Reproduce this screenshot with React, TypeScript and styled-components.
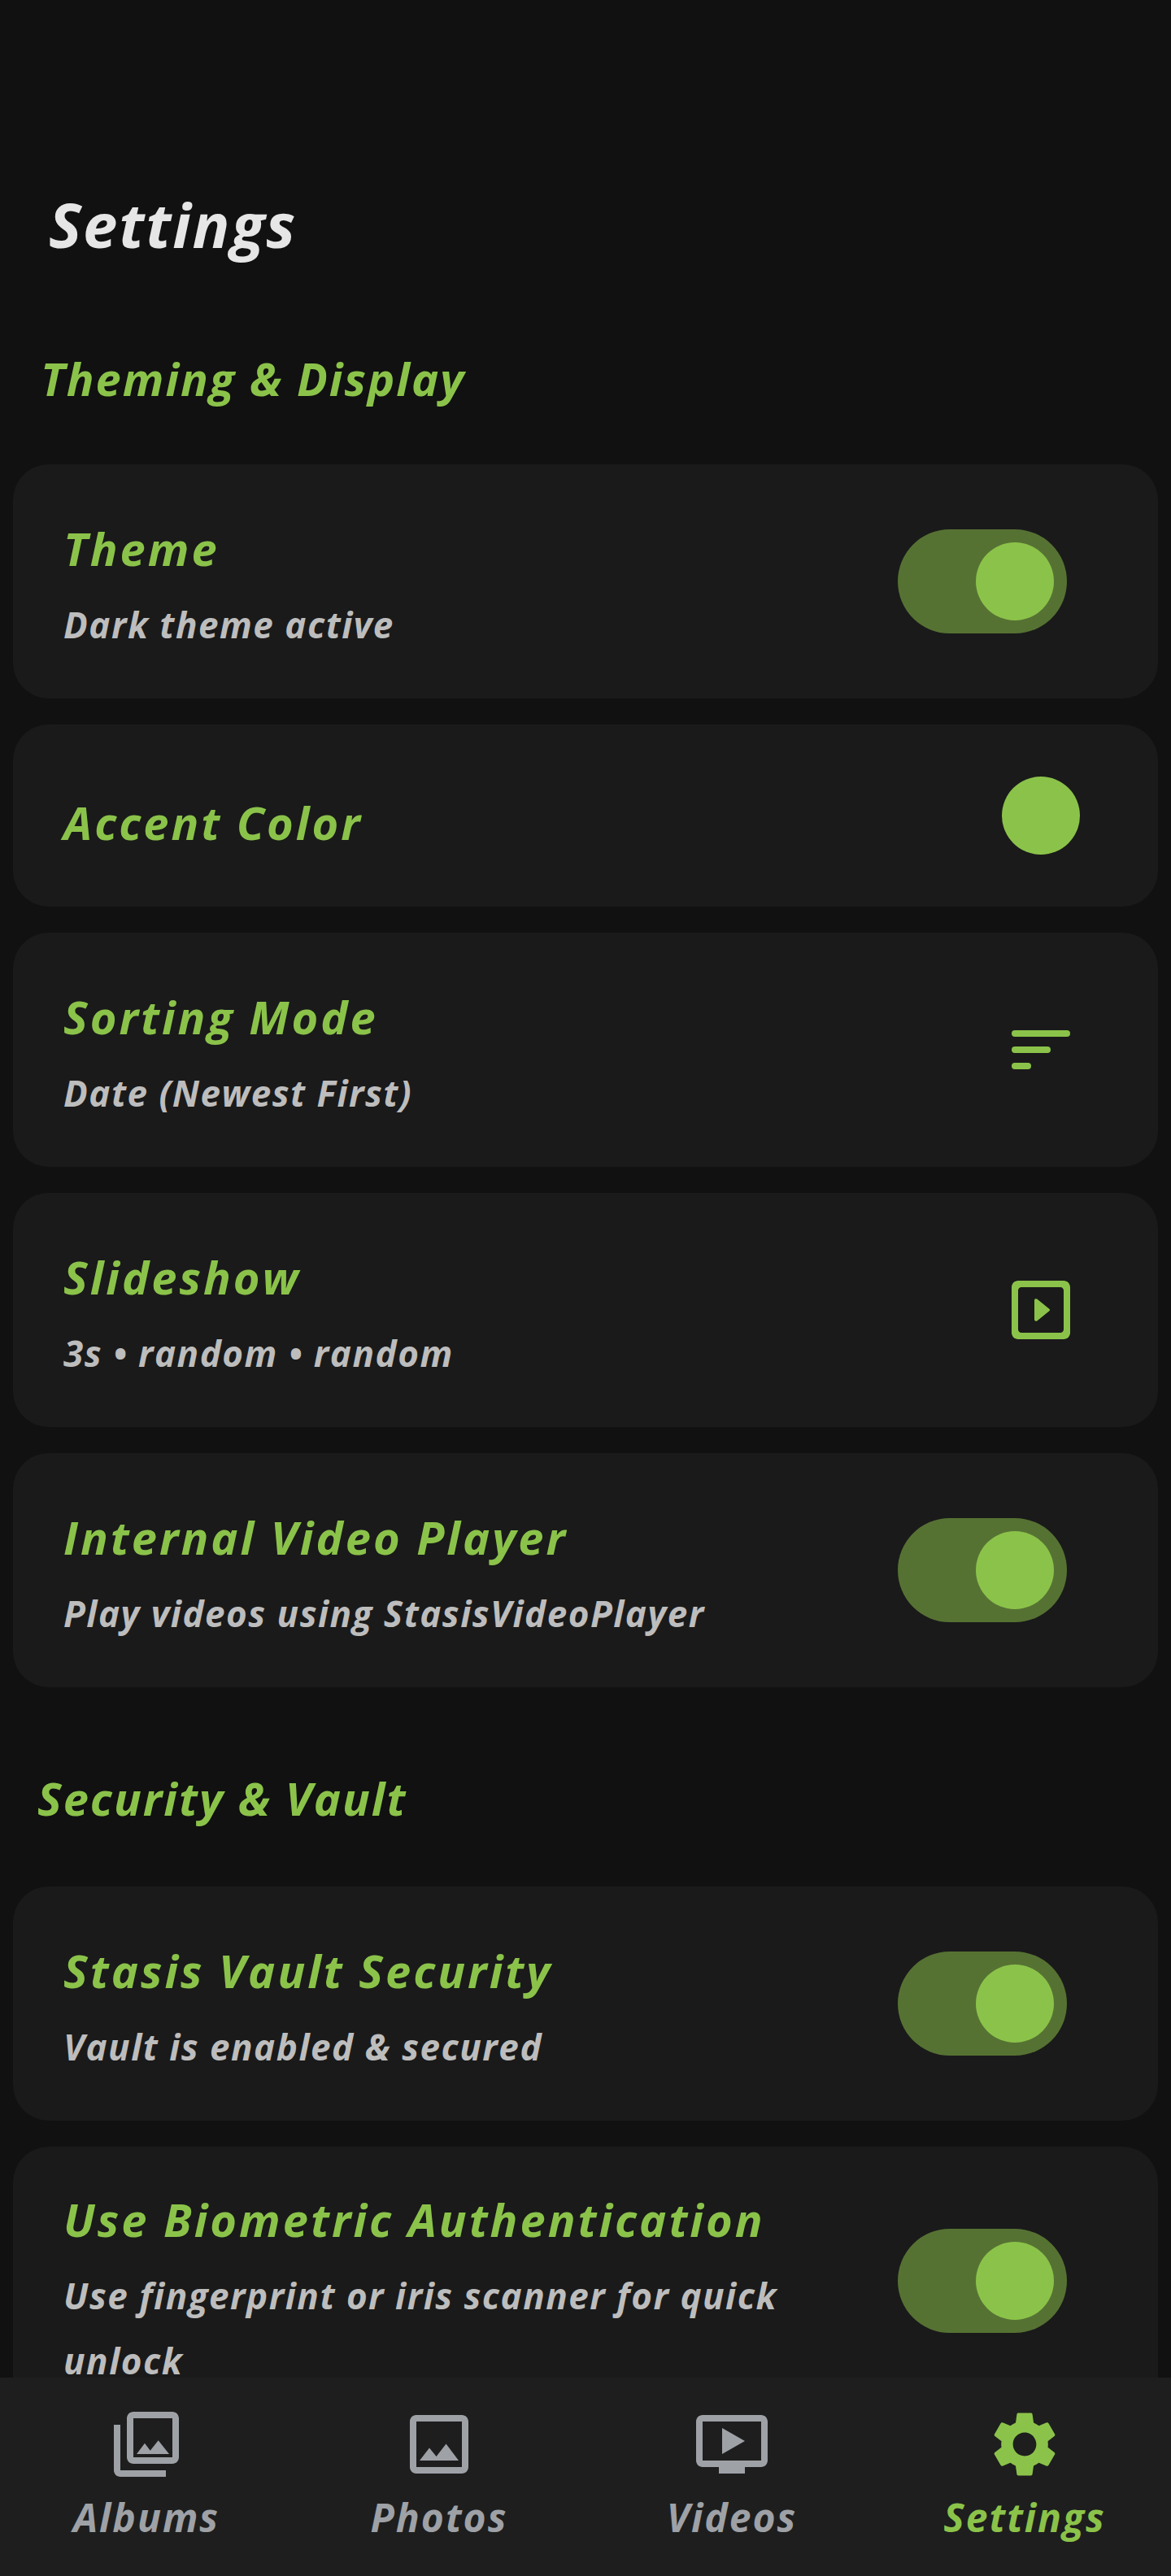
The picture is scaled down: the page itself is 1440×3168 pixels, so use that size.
import React from 'react';
import styled, { createGlobalStyle } from 'styled-components';

const ACCENT = '#8bc34a';
const FONT = '"Open Sans", "Noto Sans", sans-serif';

const GlobalStyle = createGlobalStyle`
    html, body {
        margin: 0;
        background: #111111;
    }
`;

const Screen = styled.div`
    position: relative;
    width: 1440px;
    height: 3168px;
    overflow: hidden;
    background: #111111;
    font-family: ${FONT};
    font-style: italic;
    font-weight: 700;
`;

const Content = styled.div`
    display: flex;
    flex-direction: column;
    padding: 234px 16px 0;
`;

const PageTitle = styled.h1`
    margin: 0 0 111px 44px;
    height: 84px;
    line-height: 84px;
    font-size: 76px;
    letter-spacing: 1.8px;
    color: #e6e6e6;
`;

const SectionTitle = styled.h2<{ $indent: number; $top?: number; $bottom: number }>`
    margin: ${(p) => p.$top ?? 0}px 0 ${(p) => p.$bottom}px ${(p) => p.$indent}px;
    height: 72px;
    line-height: 72px;
    font-size: 56px;
    letter-spacing: 2px;
    color: ${ACCENT};
`;

const CardList = styled.div`
    display: flex;
    flex-direction: column;
    gap: 32px;
`;

const Card = styled.div<{ $compact?: boolean }>`
    display: flex;
    align-items: center;
    justify-content: space-between;
    box-sizing: border-box;
    min-height: ${(p) => (p.$compact ? 224 : 288)}px;
    padding: 33px 112px 33px 62px;
    border-radius: 44px;
    background: #1a1a1a;
`;

const CardText = styled.div`
    display: flex;
    flex-direction: column;
    gap: 18px;
    max-width: 960px;
    padding: 20px 0 4px;
`;

const CardTitle = styled.div`
    font-size: 56px;
    line-height: 72px;
    letter-spacing: 3px;
    color: ${ACCENT};
`;

const CardSubtitle = styled.div`
    font-size: 44px;
    line-height: 80px;
    letter-spacing: 1.5px;
    color: #bdbdbd;
`;

const Track = styled.div<{ $lifted?: boolean }>`
    display: flex;
    justify-content: flex-end;
    align-items: center;
    box-sizing: border-box;
    flex: none;
    width: 208px;
    height: 128px;
    margin-top: ${(p) => (p.$lifted ? -10 : 0)}px;
    padding-right: 16px;
    border-radius: 64px;
    background: #567233;
`;

const Knob = styled.div`
    width: 96px;
    height: 96px;
    border-radius: 50%;
    background: ${ACCENT};
`;

const Swatch = styled.div`
    flex: none;
    width: 96px;
    height: 96px;
    margin-right: -16px;
    border-radius: 50%;
    background: ${ACCENT};
`;

const TrailingIcon = styled.svg`
    flex: none;
    width: 96px;
    height: 96px;
    margin-right: -16px;
    fill: ${ACCENT};
`;

const BottomNav = styled.nav`
    position: absolute;
    left: 0;
    right: 0;
    bottom: 0;
    display: grid;
    grid-template-columns: repeat(4, 1fr);
    height: 244px;
    background: #1e1e1e;
`;

const NavItem = styled.div<{ $active?: boolean }>`
    display: flex;
    flex-direction: column;
    align-items: center;
    color: ${(p) => (p.$active ? ACCENT : '#9ea1a6')};
`;

const NavIcon = styled.svg`
    width: 96px;
    height: 96px;
    margin-top: 34px;
    fill: currentColor;
`;

const NavLabel = styled.div`
    margin-top: 12px;
    font-size: 48px;
    line-height: 60px;
    letter-spacing: 2px;
`;

const Toggle = ({ lifted }: { lifted?: boolean }) => (
    <Track $lifted={lifted}>
        <Knob />
    </Track>
);

const NAV_ITEMS = [
    {
        label: 'Albums',
        path: 'M20 4v12H8V4h12m0-2H8c-1.1 0-2 .9-2 2v12c0 1.1.9 2 2 2h12c1.1 0 2-.9 2-2V4c0-1.1-.9-2-2-2zm-8.5 9.67l1.69 2.26 2.48-3.1L19 15H9zM2 6v14c0 1.1.9 2 2 2h14v-2H4V6H2z',
    },
    {
        label: 'Photos',
        path: 'M19 5v14H5V5h14m0-2H5c-1.1 0-2 .9-2 2v14c0 1.1.9 2 2 2h14c1.1 0 2-.9 2-2V5c0-1.1-.9-2-2-2zm-4.86 8.86l-3 3.87L9 13.14 6 17h12l-3.86-5.14z',
    },
    {
        label: 'Videos',
        path: 'M21 3H3c-1.11 0-2 .89-2 2v12c0 1.1.89 2 2 2h5v2h8v-2h5c1.1 0 1.99-.9 1.99-2L23 5c0-1.11-.9-2-2-2zm0 14H3V5h18v12zm-5-6l-7 4V7z',
    },
    {
        label: 'Settings',
        active: true,
        path: 'M19.14 12.94c.04-.3.06-.61.06-.94 0-.32-.02-.64-.07-.94l2.03-1.58c.18-.14.23-.41.12-.61l-1.92-3.32c-.12-.22-.37-.29-.59-.22l-2.39.96c-.5-.38-1.03-.7-1.62-.94l-.36-2.54c-.04-.24-.24-.41-.48-.41h-3.84c-.24 0-.43.17-.47.41l-.36 2.54c-.59.24-1.13.57-1.62.94l-2.39-.96c-.22-.08-.47 0-.59.22L2.74 8.87c-.12.21-.08.47.12.61l2.03 1.58c-.05.3-.09.63-.09.94s.02.64.07.94l-2.03 1.58c-.18.14-.23.41-.12.61l1.92 3.32c.12.22.37.29.59.22l2.39-.96c.5.38 1.03.7 1.62.94l.36 2.54c.05.24.24.41.48.41h3.84c.24 0 .44-.17.47-.41l.36-2.54c.59-.24 1.13-.56 1.62-.94l2.39.96c.22.08.47 0 .59-.22l1.92-3.32c.12-.22.07-.47-.12-.61l-2.01-1.58zM12 15.6c-1.98 0-3.6-1.62-3.6-3.6s1.62-3.6 3.6-3.6 3.6 1.62 3.6 3.6-1.62 3.6-3.6 3.6z',
    },
];

export default function App() {
    return (
        <Screen>
            <GlobalStyle />
            <Content>
                <PageTitle>Settings</PageTitle>
                <SectionTitle $indent={34} $bottom={70}>
                    Theming &amp; Display
                </SectionTitle>
                <CardList>
                    <Card>
                        <CardText>
                            <CardTitle>Theme</CardTitle>
                            <CardSubtitle>Dark theme active</CardSubtitle>
                        </CardText>
                        <Toggle />
                    </Card>
                    <Card $compact>
                        <CardText>
                            <CardTitle>Accent Color</CardTitle>
                        </CardText>
                        <Swatch />
                    </Card>
                    <Card>
                        <CardText>
                            <CardTitle>Sorting Mode</CardTitle>
                            <CardSubtitle>Date (Newest First)</CardSubtitle>
                        </CardText>
                        <TrailingIcon viewBox="0 0 24 24">
                            <rect x="3" y="6" width="18" height="2" rx="1" />
                            <rect x="3" y="11" width="12" height="2" rx="1" />
                            <rect x="3" y="16" width="6" height="2" rx="1" />
                        </TrailingIcon>
                    </Card>
                    <Card>
                        <CardText>
                            <CardTitle>Slideshow</CardTitle>
                            <CardSubtitle>3s • random • random</CardSubtitle>
                        </CardText>
                        <TrailingIcon viewBox="0 0 24 24">
                            <path d="M19 3H5c-1.1 0-2 .9-2 2v14c0 1.1.9 2 2 2h14c1.1 0 2-.9 2-2V5c0-1.1-.9-2-2-2zm-1 16H6c-.55 0-1-.45-1-1V6c0-.55.45-1 1-1h12c.55 0 1 .45 1 1v12c0 .55-.45 1-1 1z" />
                            <path d="M10 9.04v5.92c0 .42.48.65.81.39l3.7-2.96a.5.5 0 0 0 0-.78l-3.7-2.96a.5.5 0 0 0-.81.39z" />
                        </TrailingIcon>
                    </Card>
                    <Card>
                        <CardText>
                            <CardTitle>Internal Video Player</CardTitle>
                            <CardSubtitle>Play videos using StasisVideoPlayer</CardSubtitle>
                        </CardText>
                        <Toggle />
                    </Card>
                </CardList>
                <SectionTitle $indent={30} $top={100} $bottom={73}>
                    Security &amp; Vault
                </SectionTitle>
                <CardList>
                    <Card>
                        <CardText>
                            <CardTitle>Stasis Vault Security</CardTitle>
                            <CardSubtitle>Vault is enabled &amp; secured</CardSubtitle>
                        </CardText>
                        <Toggle />
                    </Card>
                    <Card>
                        <CardText>
                            <CardTitle>Use Biometric Authentication</CardTitle>
                            <CardSubtitle>Use fingerprint or iris scanner for quick unlock</CardSubtitle>
                        </CardText>
                        <Toggle lifted />
                    </Card>
                </CardList>
            </Content>
            <BottomNav>
                {NAV_ITEMS.map((item) => (
                    <NavItem key={item.label} $active={item.active}>
                        <NavIcon viewBox="0 0 24 24">
                            <path d={item.path} />
                        </NavIcon>
                        <NavLabel>{item.label}</NavLabel>
                    </NavItem>
                ))}
            </BottomNav>
        </Screen>
    );
}
